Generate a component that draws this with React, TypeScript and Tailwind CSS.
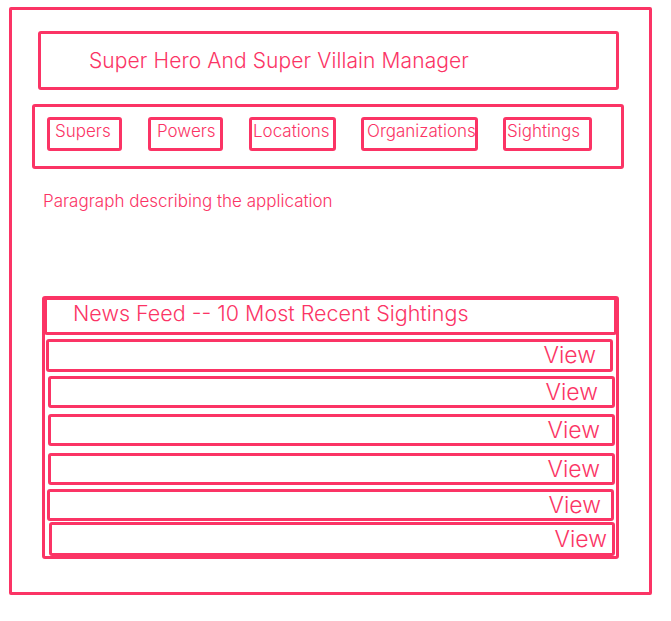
import React from "react";

const C = "border-[#fb3465]";

function Row({ ml, mr, mt, h, viewPr }: { ml: number; mr: number; mt: number; h: number; viewPr: number }) {
  return (
    <div
      className={`border-[3px] ${C} rounded-[3px] flex items-center justify-end`}
      style={{ marginLeft: ml, marginRight: mr, marginTop: mt, height: h, paddingRight: viewPr }}
    >
      <span className="text-[23px] leading-none text-[#fb3465] font-light">View</span>
    </div>
  );
}

export default function App() {
  const rows = [
    { ml: 1, mr: 3, mt: 4, h: 33, viewPr: 14 },
    { ml: 3, mr: 1, mt: 4, h: 32, viewPr: 14 },
    { ml: 3, mr: 1, mt: 6, h: 32, viewPr: 12 },
    { ml: 3, mr: 1, mt: 7, h: 32, viewPr: 12 },
    { ml: 2, mr: 2, mt: 4, h: 32, viewPr: 10 },
    { ml: 4, mr: 1, mt: 1, h: 34, viewPr: 5 },
  ];
  const nav = [
    { t: "Supers", w: 75, ml: 0, pl: 5 },
    { t: "Powers", w: 75, ml: 26, pl: 6 },
    { t: "Locations", w: 87, ml: 26, pl: 1 },
    { t: "Organizations", w: 117, ml: 25, pl: 3 },
    { t: "Sightings", w: 89, ml: 25, pl: 1 },
  ];
  return (
    <div
      className="w-[671px] h-[621px] bg-white pt-[7px] pl-[9px] text-[#fb3465]"
      style={{ fontFamily: "Inter, 'Open Sans', sans-serif" }}
    >
      <div className={`w-[643px] h-[588px] border-[3px] ${C} rounded-[2px] flex flex-col`}>
        <div
          className={`ml-[26px] mt-[21px] w-[581px] h-[59px] border-[3px] ${C} rounded-[3px] flex items-center pl-[48px]`}
        >
          <span className="text-[21px] font-light tracking-[0.1px]">Super Hero And Super Villain Manager</span>
        </div>
        <div
          className={`ml-[20px] mt-[14px] w-[592px] h-[65px] border-[3px] ${C} rounded-[3px] flex items-start pt-[10px] pl-[12px]`}
        >
          {nav.map((b) => (
            <div
              key={b.t}
              className={`h-[34px] border-[3px] ${C} rounded-[3px] flex items-start`}
              style={{ width: b.w, marginLeft: b.ml, paddingLeft: b.pl }}
            >
              <span className="text-[17px] font-light leading-[22px]">{b.t}</span>
            </div>
          ))}
        </div>
        <p className="ml-[31px] mt-[22px] text-[17px] font-light leading-[20px]">Paragraph describing the application</p>
        <div className={`ml-[30px] mt-[85px] w-[577px] h-[263px] border-[3px] ${C} rounded-[3px] flex flex-col`}>
          <div className={`-mt-[2px] -mx-[1px] h-[38px] border-[3px] ${C} rounded-[3px] flex items-center pl-[26px] pb-[5px]`}>
            <span className="text-[21.5px] font-light">News Feed -- 10 Most Recent Sightings</span>
          </div>
          {rows.map((r, i) => (
            <Row key={i} {...r} />
          ))}
        </div>
      </div>
    </div>
  );
}
